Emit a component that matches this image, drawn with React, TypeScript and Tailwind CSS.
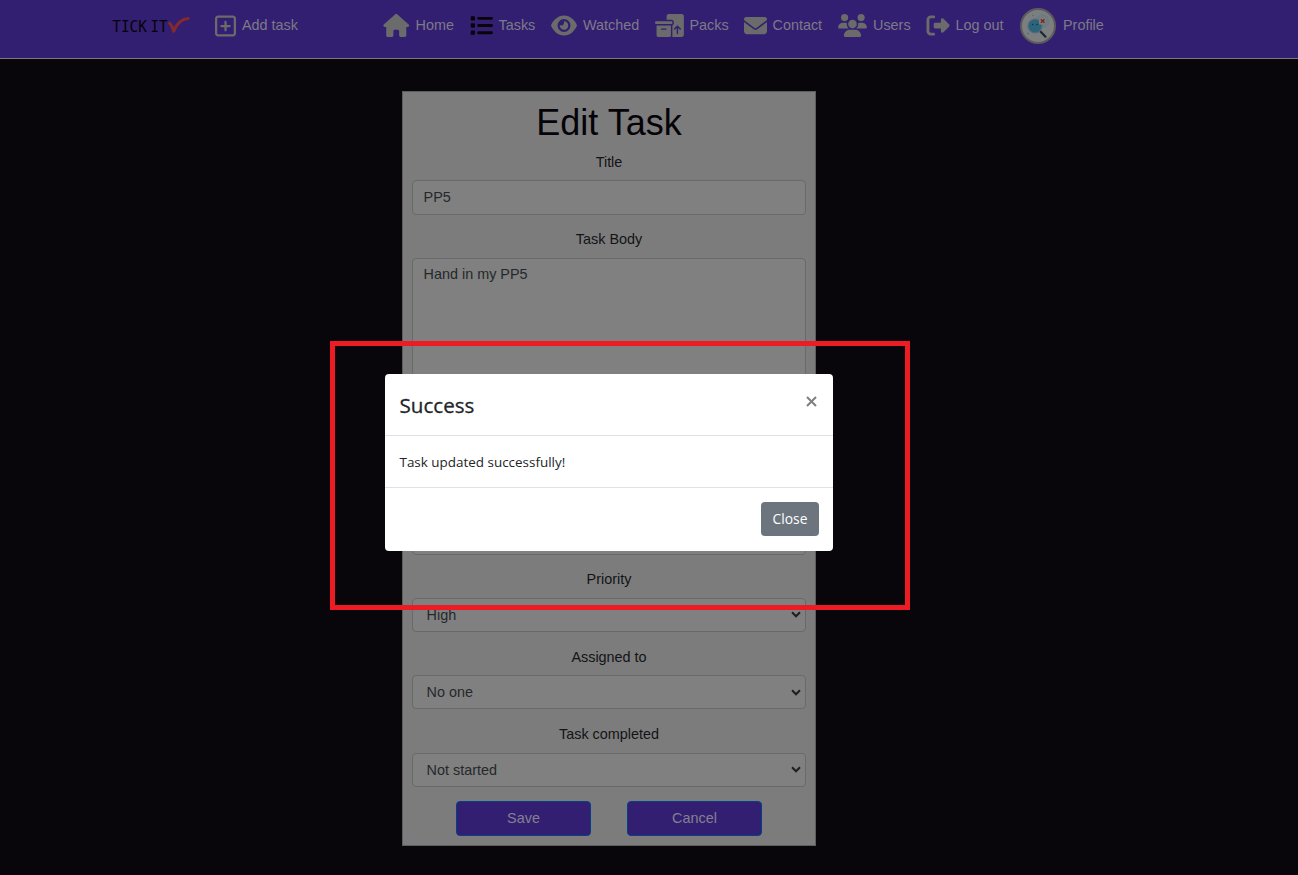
import React from "react";
import {
  FaBoxesPacking,
  FaEnvelope,
  FaEye,
  FaHouse,
  FaList,
  FaRegSquarePlus,
  FaRightFromBracket,
  FaUsers,
} from "react-icons/fa6";

function Logo() {
  return (
    <svg
      className="block h-[30px] w-[82px]"
      viewBox="0 0 82 30"
      fontFamily="'DejaVu Sans Mono', monospace"
      fontSize="16.5"
      fill="#050308"
    >
      <text x="0.3" y="21.3" textLength="34.5" lengthAdjust="spacingAndGlyphs">
        TICK
      </text>
      <text x="38.5" y="21.3" textLength="17" lengthAdjust="spacingAndGlyphs">
        IT
      </text>
      <path
        d="M57.6 12 Q60.5 15 61.8 20.3 C64.5 13 69 8.3 76 7.6"
        fill="none"
        stroke="#842a2f"
        strokeWidth="3"
        strokeLinecap="round"
        strokeLinejoin="round"
      />
    </svg>
  );
}

function Avatar() {
  return (
    <svg className="mr-px block size-9" viewBox="0 0 36 36">
      <circle cx="18" cy="18" r="17" fill="#7d7e80" stroke="#5b5b5c" strokeWidth="2" />
      <circle cx="22.5" cy="13" r="7" fill="#6b7d81" />
      <path d="M20.5 23.5 L25.5 28.7" stroke="#1d2730" strokeWidth="2.2" strokeLinecap="round" />
      <circle cx="15" cy="18" r="7" fill="#2c647c" stroke="#50707c" strokeWidth="1.2" />
      <circle cx="12.6" cy="16.5" r="0.8" fill="#12303f" />
      <circle cx="17" cy="16.5" r="0.8" fill="#12303f" />
      <rect x="19" y="9.5" width="7.5" height="7" rx="1" fill="#7c7c7c" />
      <path d="M20.9 11.2 L24.5 14.8 M24.5 11.2 L20.9 14.8" stroke="#832325" strokeWidth="1.4" />
      <circle cx="8" cy="25.5" r="0.9" fill="#4c6d79" />
      <circle cx="13" cy="7.5" r="0.8" fill="#4c6d79" />
    </svg>
  );
}

function NavItem({ icon, label }: { icon: React.ReactNode; label: string }) {
  return (
    <a className="flex items-center gap-[6px] whitespace-nowrap">
      {icon}
      <span>{label}</span>
    </a>
  );
}

function Label({ children }: { children: string }) {
  return <div className="h-[22px] text-center leading-[22px] text-[#121416]">{children}</div>;
}

function Select({ label, value }: { label: string; value: string }) {
  return (
    <div className="h-[77.5px]">
      <Label>{label}</Label>
      <div className="mt-[7.7px] flex h-[34px] items-center justify-between rounded-[4px] border border-[#67696b] bg-[#808080] pr-[4.5px] pl-[13.6px] text-[#25282b]">
        <span className="pt-[1.4px]">{value}</span>
        <svg className="mt-[0.5px] h-[7px] w-[10px]" viewBox="0 0 10 7">
          <path d="M1 1.3 L5 5.3 L9 1.3" fill="none" stroke="#1c1e20" strokeWidth="2" />
        </svg>
      </div>
    </div>
  );
}

export default function App() {
  return (
    <div className="relative h-[875px] w-[1298px] overflow-hidden bg-[#08060b] font-['Liberation_Sans',Arial,sans-serif] text-[14.4px]">
      <header className="flex h-[59px] border-b border-[#7a7a7a] bg-[#321f71] pl-[112px] text-[#7d7a88]">
        <div className="grid h-[51px] grid-cols-[103px_168px_86.5px_81.5px_103.5px_89px_94.5px_87.5px_94.5px_90px] items-center">
          <Logo />
          <NavItem icon={<FaRegSquarePlus className="h-[24px] w-[21px] text-[#6b6b6b]" />} label="Add task" />
          <NavItem icon={<FaHouse className="h-[23px] w-[26.5px] text-[#6b6b6b]" />} label="Home" />
          <NavItem icon={<FaList className="h-[23px] w-[23px] text-[#070509]" />} label="Tasks" />
          <NavItem icon={<FaEye className="h-[23px] w-[26px] text-[#6b6b6b]" />} label="Watched" />
          <NavItem icon={<FaBoxesPacking className="h-[23px] w-[29px] text-[#6b6b6b]" />} label="Packs" />
          <NavItem icon={<FaEnvelope className="h-[23px] w-[23px] text-[#6b6b6b]" />} label="Contact" />
          <NavItem icon={<FaUsers className="h-[23px] w-[29px] text-[#6b6b6b]" />} label="Users" />
          <NavItem icon={<FaRightFromBracket className="h-[23px] w-[24px] text-[#6b6b6b]" />} label="Log out" />
          <NavItem icon={<Avatar />} label="Profile" />
        </div>
      </header>

      <main className="mt-[32px] ml-[402px] h-[755px] w-[414px] border border-[#5d5d5e] bg-[#7c7c7c] px-[9px] pt-[9px]">
        <h1 className="h-[43px] text-center text-[36px] leading-[43px] text-[#050308]">Edit Task</h1>
        <div className="mt-[7px] h-[77px]">
          <Label>Title</Label>
          <div className="mt-[7px] flex h-[35px] items-center rounded-[4px] border border-[#67696b] bg-[#808080] px-[10.6px] pt-px text-[#25282b]">
            PP5
          </div>
        </div>
        <div className="h-[340px]">
          <Label>Task Body</Label>
          <div className="mt-[8px] h-[297px] rounded-[4px] border border-[#67696b] bg-[#808080] px-[10.6px] pt-[5px] leading-[21.6px] text-[#25282b]">
            Hand in my PP5
          </div>
        </div>
        <Select label="Priority" value="High" />
        <Select label="Assigned to" value="No one" />
        <Select label="Task completed" value="Not started" />
        <div className="flex justify-center gap-[36px] pt-[0.5px] text-[#858092]">
          <button className="h-[35px] w-[135px] rounded-[4px] border border-[#063f86] bg-[#321f71]">Save</button>
          <button className="h-[35px] w-[135px] rounded-[4px] border border-[#063f86] bg-[#321f71]">Cancel</button>
        </div>
      </main>

      <div
        role="dialog"
        className="absolute top-[374px] left-[385px] h-[177px] w-[448px] rounded-[4px] bg-white font-['Open_Sans','Noto_Sans',sans-serif] text-[#212529]"
      >
        <div className="flex h-[62px] justify-between border-b border-[#dee2e6] pr-[16.5px] pl-[14.5px]">
          <h2 className="pt-[15.4px] text-[20.6px] leading-[32px] font-medium [-webkit-text-stroke:0.3px_#212529]">
            Success
          </h2>
          <svg className="mt-[22px] size-[11px]" viewBox="0 0 11 11">
            <path d="M1 1 L10 10 M10 1 L1 10" stroke="#7f7f7f" strokeWidth="2" />
          </svg>
        </div>
        <div className="h-[52px] border-b border-[#dee2e6] pt-[15px] pl-[14.5px] text-[13.45px] leading-[22px]">
          Task updated successfully!
        </div>
        <div className="flex justify-end pt-[14px] pr-[14px]">
          <button className="h-[34px] w-[58px] rounded-[4px] bg-[#6c757d] text-[13.8px] text-white">Close</button>
        </div>
      </div>

      <div className="absolute top-[341px] left-[330px] h-[269px] w-[580px] border-[5px] border-[#ed1c24]" />
    </div>
  );
}
